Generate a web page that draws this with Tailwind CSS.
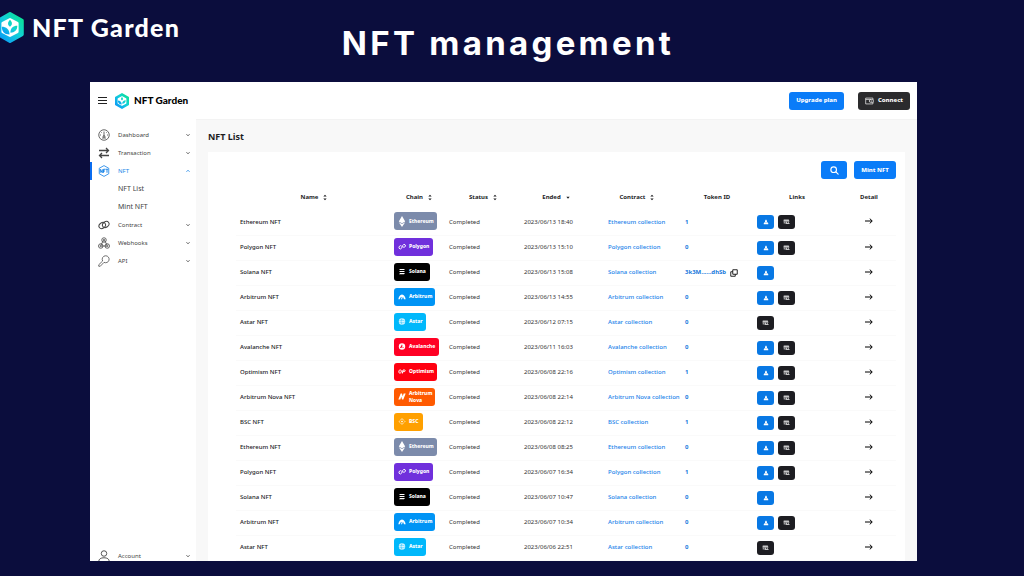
<!DOCTYPE html>
<html lang="en">
<head>
<meta charset="utf-8">
<meta name="viewport" content="width=device-width, initial-scale=1">
<title>NFT Garden – NFT management</title>
<script src="https://cdn.jsdelivr.net/npm/@tailwindcss/browser@4"></script>
</head>
<body class="flex h-screen flex-col overflow-hidden bg-[#0b0d3d] font-['Noto_Sans',sans-serif] text-[#1d1d1f]">

<svg class="absolute size-0" aria-hidden="true">
  <defs>
    <linearGradient id="leaf" x1="0" y1="1" x2="1" y2="0"><stop offset="0.1" stop-color="#0b9cf5"/><stop offset="0.55" stop-color="#12d0d8"/><stop offset="1" stop-color="#08e58a"/></linearGradient>
    <symbol id="logo" viewBox="0 0 32 36">
      <path d="M16 2 30 10v16L16 34 2 26V10z" fill="url(#leaf)" stroke="url(#leaf)" stroke-width="4" stroke-linejoin="round"/>
      <path d="M16 8.500 24.500 13v10L16 27.500 7.500 23V13z" fill="#fff" stroke="#fff" stroke-width="3" stroke-linejoin="round"/>
      <path d="M15.500 26C9 26 6.500 22 6.500 17c5 0 9 3 9 9zM16.500 24c0-5 3-8 8-8 0 5-3 8-8 8zM16 17c-3-2-3-5 0-8 3 3 3 6 0 8z" fill="url(#leaf)"/>
    </symbol>
    <symbol id="gauge" viewBox="0 0 24 24"><g fill="none" stroke="currentColor" stroke-width="1.600"><circle cx="12" cy="12" r="10.500"/><path d="M12 5v10M4 12h2M18 12h2M6.500 6.500l1.200 1.200M17.500 6.500l-1.200 1.200M8 18h8"/><circle cx="12" cy="15" r="1.800"/></g></symbol>
    <symbol id="swap" viewBox="0 0 24 24"><path d="M2 7h19M16 2l5 5-5 5M22 17H3M8 12l-5 5 5 5" fill="none" stroke="currentColor" stroke-width="2.600"/></symbol>
    <symbol id="nft" viewBox="0 0 24 24"><g fill="none" stroke="currentColor" stroke-width="1.700"><path d="M12 1.200 21.500 6.500v11L12 22.800 2.500 17.500v-11z"/><path d="M4.500 15.500v-7l4 7v-7M11 15.500v-7h4M11 12h3M15.500 8.500h5M18 8.500v7" stroke-width="2"/></g></symbol>
    <symbol id="rings" viewBox="0 0 24 24"><g fill="none" stroke="currentColor" stroke-width="2"><ellipse cx="8.500" cy="13" rx="7" ry="5.500" transform="rotate(-35 8.500 13)"/><ellipse cx="15.500" cy="11" rx="7" ry="5.500" transform="rotate(-35 15.500 11)"/></g></symbol>
    <symbol id="hook" viewBox="0 0 24 24"><g fill="none" stroke="currentColor" stroke-width="1.600"><circle cx="12" cy="6" r="4.500"/><circle cx="12" cy="6" r="1.300"/><circle cx="5.500" cy="18" r="4.500"/><circle cx="5.500" cy="18" r="1.300"/><circle cx="18.500" cy="18" r="4.500"/><circle cx="18.500" cy="18" r="1.300"/><path d="M10.500 7.500 6 16M13.500 7.500 18 16M7 18h10"/></g></symbol>
    <symbol id="key" viewBox="0 0 24 24"><path d="M15.500 1.500a7 7 0 1 1-3.500 13.200L4.500 22.500H1.500v-3L9.300 12A7 7 0 0 1 15.500 1.500z" fill="none" stroke="currentColor" stroke-width="1.500" stroke-linejoin="round"/></symbol>
    <symbol id="user" viewBox="0 0 24 24"><g fill="none" stroke="currentColor" stroke-width="1.800"><circle cx="12" cy="7" r="5.500"/><path d="M1.500 23c0-5 4-7.500 10.500-7.500S22.500 18 22.500 23z"/></g></symbol>
    <symbol id="chev" viewBox="0 0 8 8"><path d="M1 2.500 4 5.500 7 2.500" fill="none" stroke="currentColor" stroke-width="1.800"/></symbol>
    <symbol id="wallet" viewBox="0 0 20 16"><path d="M17.500 4.500V1.500H1.500v13h16v-3M12.500 5h6v6h-6a3 3 0 0 1 0-6zM1.500 4.500h12" fill="none" stroke="currentColor" stroke-width="1.500"/><circle cx="14" cy="8" r="1.200" fill="currentColor"/></symbol>
    <symbol id="search" viewBox="0 0 16 16"><g fill="none" stroke="currentColor" stroke-width="2" stroke-linecap="round"><circle cx="6.500" cy="6.500" r="5"/><path d="m10.500 10.500 4 4"/></g></symbol>
    <symbol id="sort" viewBox="0 0 6 10"><path d="M.5 3.500 3 .8l2.500 2.700zM.5 6.500 3 9.200l2.500-2.700z" fill="currentColor"/></symbol>
    <symbol id="down" viewBox="0 0 6 10"><path d="M.5 4 3 7l2.500-3z" fill="currentColor"/></symbol>
    <symbol id="arrow" viewBox="0 0 16 12"><path d="M0 6h14M9.500 1.200 14.500 6l-5 4.800" fill="none" stroke="currentColor" stroke-width="2"/></symbol>
    <symbol id="copy" viewBox="0 0 16 16"><path d="M5.500 1.500h9v9h-9zM5.500 5.500h-4v9h9v-4" fill="none" stroke="currentColor" stroke-width="1.700" stroke-linejoin="round"/></symbol>
    <symbol id="ship" viewBox="0 0 12 12"><path d="M6 1c1.500 1.200 2 2.800 2 5H4c0-2.200.5-3.800 2-5zM3 6.500h6l1.500 2v2h-9v-2z" fill="currentColor"/></symbol>
    <symbol id="market" viewBox="0 0 14 12"><path d="M1.500 1h10l1.500 4H.8zM1.500 5.500h2V9h-2zM5 5.500h3V8H5zM9.500 5.500h2V10h-2zM5 8h8v2H5z" fill="currentColor" opacity=".75"/></symbol>
    <symbol id="ethereum" viewBox="0 0 16 24"><path d="M8 0l7 12-7 4-7-4zM1 13.500l7 4 7-4L8 24z" fill="currentColor"/></symbol>
    <symbol id="polygon" viewBox="0 0 24 20"><path d="M11 9 7.500 7.500 3 10.500V15l4 2.500L11 15l3-8 4-4 4 2.500V10l-4 2.500L14.500 11" fill="none" stroke="currentColor" stroke-width="2.800" stroke-linejoin="round"/></symbol>
    <symbol id="solana" viewBox="0 0 24 24"><path d="M5 3h17l-3 4H2zM2 10h17l3 4H5zM5 17h17l-3 4H2z" fill="currentColor"/></symbol>
    <symbol id="arbitrum" viewBox="0 0 24 20"><path d="M1 18C2 11 6 4 12 4s10 7 11 14h-5l-3-7-3 7H9l2-6-2-1-4 7z" fill="currentColor"/></symbol>
    <symbol id="astar" viewBox="0 0 24 24"><circle cx="12" cy="12" r="11" fill="currentColor" opacity=".85"/><path d="M3 9c6-2 12-2 18 1M3 15c5 2 13 2 18 0M12 2c-4 6-4 14 0 20" stroke="#00b8fb" stroke-width="1.500" fill="none"/></symbol>
    <symbol id="avalanche" viewBox="0 0 24 24"><circle cx="12" cy="12" r="11" fill="currentColor"/><path d="M12 4.500 5 17.500h5l3.800-7zM15.500 13l-2.500 4.500h5z" fill="#ff0024"/></symbol>
    <symbol id="optimism" viewBox="0 0 24 14"><path d="M8 2.500H5.500Q3.500 2.500 3 5L2.500 9q0 2.500 2 2.500H7q2 0 2.500-2.500l.5-4q0-2.500-2-2.500zM13 13l2-10.500h4.500q2.500 0 2 2.500t-3 2.500H15" fill="none" stroke="currentColor" stroke-width="3"/></symbol>
    <symbol id="nova" viewBox="0 0 24 20"><path d="M1 19 8 1h4l2 8 3-8h6l-7 18h-4l-2-8-3 8z" fill="currentColor"/></symbol>
    <symbol id="bsc" viewBox="0 0 24 24"><path d="M6 8l6-6 6 6M6 16l6 6 6-6M2 12l2.500-2.500M2 12l2.500 2.500M22 12l-2.500-2.500M22 12l-2.500 2.500" fill="none" stroke="currentColor" stroke-width="2.500"/><path d="m12 8.500 3.500 3.500-3.500 3.500L8.500 12z" fill="currentColor"/></symbol>
  </defs>
</svg>

<header class="relative flex h-[82px] shrink-0 items-start justify-center">
  <div class="absolute top-[11px] -left-1 flex items-center gap-2">
    <svg class="h-[31px] w-7"><use href="#logo"/></svg>
    <span class="font-['Lato',sans-serif] text-[25px] leading-8 font-black tracking-wider text-white">NFT Garden</span>
  </div>
  <h1 class="pt-[23px] pr-2 font-['Inter',sans-serif] text-[33px] leading-10 font-bold tracking-widest text-white">NFT management</h1>
</header>

<div class="mr-[107px] mb-[15px] ml-[90px] flex min-h-0 flex-1 flex-col overflow-hidden bg-white">
  <div class="flex h-[37px] shrink-0 items-center pr-[7px] pl-2">
    <button class="h-[7px] w-[9px] border-y border-[#222]" aria-label="Menu"><span class="mx-auto block h-px bg-[#222]"></span></button>
    <a href="#" class="ml-2 flex items-center gap-[5px] font-['Lato',sans-serif] text-[10px] font-black text-black">
      <svg class="h-4 w-[14px]"><use href="#logo"/></svg>NFT Garden</a>
    <button class="ml-auto h-[18px] rounded-[3px] bg-[#0a7cf8] px-[7px] text-[6px] font-extrabold text-white">Upgrade plan</button>
    <button class="ml-[14px] flex h-[18px] items-center gap-1 rounded-[3px] bg-[#2b2b2d] px-[7px] text-[6px] font-extrabold text-white">
      <svg class="h-2 w-[9px]"><use href="#wallet"/></svg>Connect</button>
  </div>

  <div class="flex min-h-0 flex-1">
    <nav id="nav" class="flex w-[106px] shrink-0 flex-col pt-[7px] text-[6px] text-[#444]"></nav>

    <main class="min-w-0 flex-1 border-t border-[#f3f3f3] bg-[#f8f8f8] pr-3 pl-3">
      <h2 class="pt-[9px] pb-[7px] text-[9px] leading-4 font-bold">NFT List</h2>
      <section class="bg-white pr-[9px] pl-7">
        <div class="flex justify-end gap-[7px] pt-[9px] pb-[6px]">
          <button class="flex h-[18px] w-[26px] items-center justify-center rounded-[3px] bg-[#0a7cf8] text-white" aria-label="Search"><svg class="size-[9px]"><use href="#search"/></svg></button>
          <button class="h-[18px] w-[42px] rounded-[3px] bg-[#0a7cf8] text-[6px] font-extrabold text-white">Mint NFT</button>
        </div>
        <table class="w-full table-fixed border-collapse text-left text-[6px] whitespace-nowrap">
          <thead><tr id="head" class="h-[25px]"></tr></thead>
          <tbody id="rows"></tbody>
        </table>
      </section>
    </main>
  </div>
</div>

<script>
const nav = [
  ['Dashboard', 'gauge'], ['Transaction', 'swap'], ['NFT', 'nft', 'open'], ['NFT List'], ['Mint NFT'],
  ['Contract', 'rings'], ['Webhooks', 'hook'], ['API', 'key'], ['Account', 'user', 'last'],
];
document.getElementById('nav').innerHTML = nav.map(([label, icon, state]) => `
  <a href="#" class="flex h-[18px] shrink-0 items-center border-l-2 pr-[6px] pl-[6px] ${state === 'open' ? 'border-[#0a6cf0] text-[#2188e8]' : 'border-transparent'} ${state === 'last' ? 'mt-auto -mb-1' : ''}">
    <span class="w-5 shrink-0">${icon ? `<svg class="size-3"><use href="#${icon}"/></svg>` : ''}</span>
    <span class="flex-1 ${icon ? '' : 'text-[7px]'}">${label}</span>
    ${icon ? `<svg class="size-1 ${state === 'open' ? 'rotate-180' : ''}"><use href="#chev"/></svg>` : ''}
  </a>`).join('');

const cols = [
  ['Name', 'w-[156px]', 'sort'], ['Chain', 'w-[54px]', 'sort'], ['Status', 'w-[74px]', 'sort'], ['Ended', 'w-[72px]', 'down'],
  ['Contract', 'w-[90px]', 'sort'], ['Token ID', 'w-[70px]'], ['Links', 'w-[90px]'], ['Detail', 'w-[54px]'],
];
document.getElementById('head').innerHTML = cols.map(([label, width, sort]) => `
  <th scope="col" class="${width} p-0 font-bold"><span class="flex items-center justify-center gap-[5px]">${label}${sort ? `<svg class="h-[7px] w-1"><use href="#${sort}"/></svg>` : ''}</span></th>`).join('');

const chains = {
  Ethereum: ['ethereum', 'bg-[#7c8bab]', 'w-[43px]'], Polygon: ['polygon', 'bg-[#7030dc]', 'w-[39px]'],
  Solana: ['solana', 'bg-black', 'w-9'], Arbitrum: ['arbitrum', 'bg-[#0094f5]', 'w-[41px]'],
  Astar: ['astar', 'bg-[#00b8fb]', 'w-8'], Avalanche: ['avalanche', 'bg-[#ff0024]', 'w-[45px]'],
  Optimism: ['optimism', 'bg-[#ff0010]', 'w-[43px]'], 'Arbitrum Nova': ['nova', 'bg-[#ff5a00]', 'w-[41px]'],
  BSC: ['bsc', 'bg-[#ffa000]', 'w-[29px]'],
};
const data = [
  ['Ethereum', '06/13 18:40', '1', 'sm'], ['Polygon', '06/13 15:10', '0', 'sm'], ['Solana', '06/13 15:08', '3k3M......dhSb', 's'],
  ['Arbitrum', '06/13 14:55', '0', 'sm'], ['Astar', '06/12 07:15', '0', 'm'], ['Avalanche', '06/11 16:03', '0', 'sm'],
  ['Optimism', '06/08 22:16', '1', 'sm'], ['Arbitrum Nova', '06/08 22:14', '0', 'sm'], ['BSC', '06/08 22:12', '1', 'sm'],
  ['Ethereum', '06/08 08:25', '0', 'sm'], ['Polygon', '06/07 16:34', '1', 'sm'], ['Solana', '06/07 10:47', '0', 's'],
  ['Arbitrum', '06/07 10:34', '0', 'sm'], ['Astar', '06/06 22:51', '0', 'm'],
];
document.getElementById('rows').innerHTML = data.map(([chain, date, token, links]) => {
  const [icon, color, width] = chains[chain];
  return `<tr class="h-[25px] border-b border-[#fafafa]">
    <td class="p-0 pl-1 font-medium">${chain} NFT</td>
    <td class="p-0 pb-[2px] pl-[2px]"><span class="flex h-[18px] items-center gap-[3px] rounded-[3px] pl-1 text-[5px] leading-[7px] font-extrabold whitespace-normal text-white ${color} ${width}"><svg class="${icon === 'ethereum' ? 'h-[11px]' : 'h-[7px]'} w-2 shrink-0"><use href="#${icon}"/></svg>${chain}</span></td>
    <td class="p-0 pl-[3px] text-[#333]">Completed</td>
    <td class="p-0 pl-1 text-[#333]">2023/${date}</td>
    <td class="p-0 pl-4"><a href="#" class="font-medium text-[#1d84ea]">${chain} collection</a></td>
    <td class="p-0 pl-[3px]"><span class="flex items-center gap-1 font-bold text-[#1878dc]">${token}${token.length > 1 ? '<button class="flex text-black" aria-label="Copy token ID"><svg class="size-2"><use href="#copy"/></svg></button>' : ''}</span></td>
    <td class="p-0 pl-[5px]"><span class="flex gap-1">
      ${links.includes('s') ? '<a href="#" aria-label="Explorer" class="flex h-[14px] w-[17px] items-center justify-center rounded-[3px] bg-[#0878e4] text-white"><svg class="size-[6px]"><use href="#ship"/></svg></a>' : ''}
      ${links.includes('m') ? '<a href="#" aria-label="Marketplace" class="flex h-[14px] w-[17px] items-center justify-center rounded-[3px] bg-[#1d1d22] text-white"><svg class="h-[6px] w-[7px]"><use href="#market"/></svg></a>' : ''}
    </span></td>
    <td class="p-0 pb-[2px]"><a href="#" aria-label="Detail" class="flex justify-center text-black"><svg class="h-[6px] w-2"><use href="#arrow"/></svg></a></td>
  </tr>`;
}).join('');
</script>
</body>
</html>
